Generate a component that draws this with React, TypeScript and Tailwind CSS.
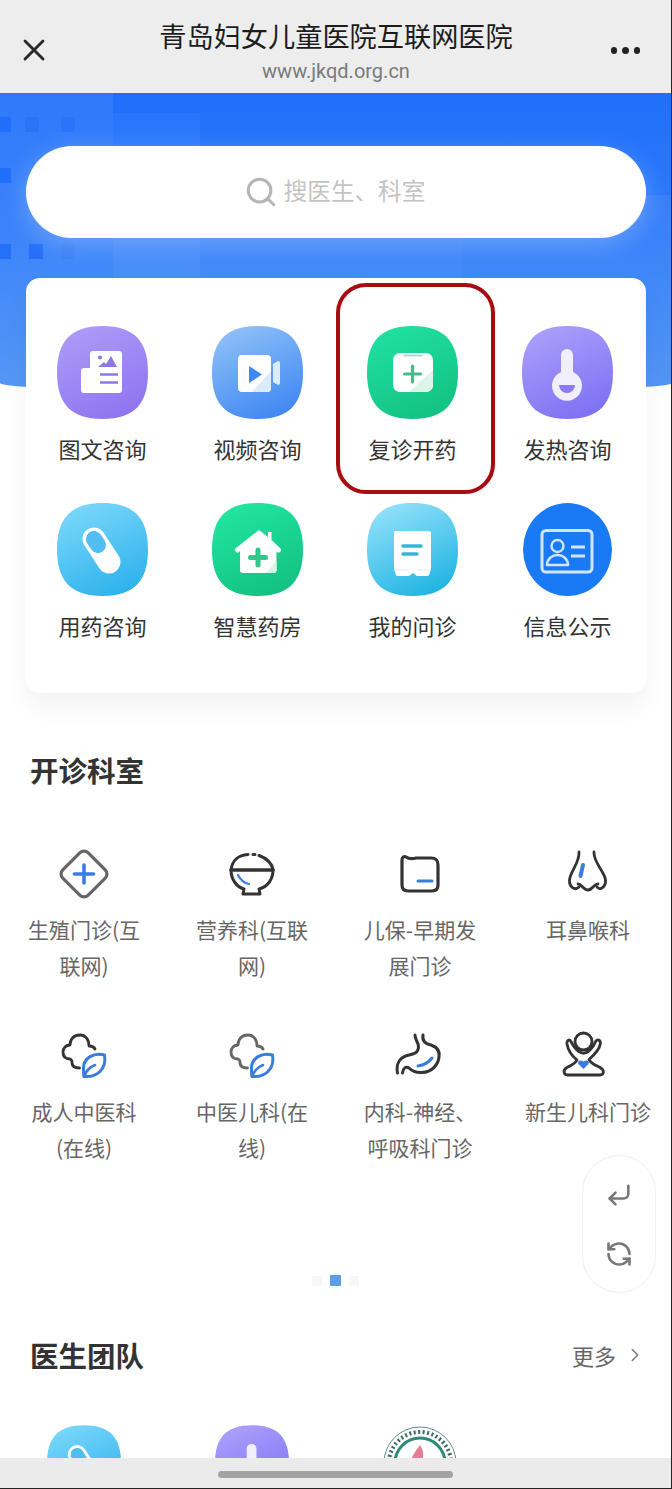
import { CornerDownLeft, RefreshCcw, ChevronRight, Search, X } from "lucide-react";
import type { ReactNode } from "react";

const SQUIRCLE = "M45.5 0C78 0 91 16 91 46.5C91 77 78 93 45.5 93C13 93 0 77 0 46.5C0 16 13 0 45.5 0Z";

function Squircle({ id, from, to, children, x1 = "0.25", y1 = "0", x2 = "0.7", y2 = "1", className = "w-[91px] h-[93px]" }: { id: string; from: string; to: string; children: ReactNode; x1?: string; y1?: string; x2?: string; y2?: string; className?: string }) {
  return (
    <svg viewBox="0 0 91 93" className={className}>
      <defs>
        <linearGradient id={id} x1={x1} y1={y1} x2={x2} y2={y2}>
          <stop offset="0" stopColor={from} />
          <stop offset="1" stopColor={to} />
        </linearGradient>
      </defs>
      <path d={SQUIRCLE} fill={`url(#${id})`} />
      {children}
    </svg>
  );
}

const ImageText = () => (
  <Squircle id="g1" from="#ac9bf8" to="#8f74f0">
    <path d="M36 25H62a3 3 0 0 1 3 3V64a3 3 0 0 1-3 3H27a3 3 0 0 1-3-3V45a3 3 0 0 1 3-3h6V28a3 3 0 0 1 3-3Z" fill="#fff" />
    <circle cx="43" cy="31.5" r="2" fill="#8d78e6" />
    <path d="M41 41l6-5 2 2 5-8 6 11Z" fill="#8d78e6" />
    <path d="M43 48.5H61M43 56.5H61" stroke="#8d78e6" strokeWidth="2.6" />
  </Squircle>
);
const Video = () => (
  <Squircle id="g2" from="#8fc0f8" to="#3f87f2">
    <rect x="26" y="29" width="33" height="37" rx="4" fill="#fff" />
    <path d="M59 45V62a4 4 0 0 1-4 4H40Z" fill="#dcebfc" />
    <path d="M37 40l13 8.5L37 57Z" fill="#3f87f2" />
    <path d="M61 38l5-3a2 2 0 0 1 2 2V57a2 2 0 0 1-2 2l-5-3Z" fill="#dcebfc" />
  </Squircle>
);
const Kit = () => (
  <Squircle id="g3" from="#20e0a0" to="#13c184">
    <rect x="26" y="27" width="40" height="39" rx="7" fill="#fff" />
    <path d="M66 44V59a7 7 0 0 1-7 7H42Z" fill="#dcf5ea" />
    <path d="M37 29.500H55" stroke="#8fdcbc" strokeWidth="1.600" strokeLinecap="round" />
    <path d="M45.5 40V56M37.5 48H53.5" stroke="#3fbf8b" strokeWidth="3.2" strokeLinecap="round" />
  </Squircle>
);
const Thermo = ({ id = "g4", className }: { id?: string; className?: string }) => (
  <Squircle id={id} from="#ab9ffb" to="#7c71f3" className={className}>
    <path d="M39 46V29a6 6 0 0 1 12 0V46a15 15 0 1 1-12 0Z" fill="#f1effe" />
    <path d="M37 59H53a8 8 0 0 1-16 0Z" fill="#8b7bf2" />
  </Squircle>
);
const Pill = ({ id = "g5", className }: { id?: string; className?: string }) => (
  <Squircle id={id} from="#7bd7fa" to="#2db1ec" className={className}>
    <path d="M37 36L52 59" stroke="#fff" strokeWidth="23" strokeLinecap="round" />
    <path d="M37 36L41 42" stroke="#52bdf0" strokeWidth="16" strokeLinecap="round" />
  </Squircle>
);
const House = () => (
  <Squircle id="g6" from="#22e5a2" to="#12c181">
    <path d="M47 27L56 34V29h3.5V37L68 45a2.5 2.5 0 0 1-3 4L64.500 48V67a3 3 0 0 1-3 3H31a3 3 0 0 1-3-3V48L27 49a2.500 2.500 0 0 1-3-4Z" fill="#fff" />
    <path d="M64.500 58V67a3 3 0 0 1-3 3H54Z" fill="#d8f4e7" />
    <path d="M46 47V62M38.500 54.500H53.500" stroke="#2ec88d" strokeWidth="5" strokeLinecap="round" />
  </Squircle>
);
const Receipt = () => (
  <Squircle id="g7" from="#92e1fa" to="#1fb4e2">
    <path d="M27 30a2 2 0 0 1 2-2H62a2 2 0 0 1 2 2V66l-2 6a2 2 0 0 1-2 1H50l-4-3-4 3H31a2 2 0 0 1-2-1l-2-6Z" fill="#fff" />
    <path d="M36 43H54M36 51H50" stroke="#35b6d8" strokeWidth="3.4" strokeLinecap="round" />
    <path d="M28 67H41M50 67H63" stroke="#d6eef5" strokeWidth="1.200" />
  </Squircle>
);
const IdCard = () => (
  <svg viewBox="0 0 91 93" className="w-[91px] h-[93px]">
    <ellipse cx="45.500" cy="46.500" rx="44.500" ry="46.500" fill="#1a7af6" />
    <rect x="20" y="27.500" width="50" height="41.500" rx="4" fill="none" stroke="#d2e5fd" strokeWidth="3" />
    <circle cx="35.500" cy="43" r="6" fill="none" stroke="#d2e5fd" strokeWidth="2.400" />
    <path d="M25 62c0-6 5-10 10.500-10S46 56 46 62Z" fill="none" stroke="#d2e5fd" strokeWidth="2.400" strokeLinejoin="round" />
    <path d="M49 44H63M49 53H63" stroke="#d2e5fd" strokeWidth="3.200" />
  </svg>
);

const Dept = ({ children }: { children: ReactNode }) => (
  <svg viewBox="0 0 52 52" className="w-[52px] h-[52px] mx-auto" fill="none" strokeLinecap="round" strokeLinejoin="round">
    {children}
  </svg>
);
const BLUE = "#3a7be0";
const INK = "#333";

const DiamondIcon = () => (
  <Dept>
    <rect x="8" y="8" width="36" height="36" rx="6" transform="rotate(45 26 26)" stroke="#666" strokeWidth="3.200" />
    <path d="M26 17V35M16.500 26H35.500" stroke={BLUE} strokeWidth="3.600" />
  </Dept>
);
const BowlIcon = () => (
  <Dept>
    <path d="M5 22C6 13 12 7 22 6.500M27 6.500H29M33 7.500C40 10 46 15 47 22" stroke={INK} strokeWidth="3" />
    <path d="M5 22H47" stroke={INK} strokeWidth="3.400" />
    <path d="M5 22C5 32 11 39 18 41L17 46H34L33 41C41 39 47 32 47 22" stroke={INK} strokeWidth="3" />
    <path d="M12 27C14 31 18 35 23 36" stroke={BLUE} strokeWidth="2.200" />
  </Dept>
);
const FolderIcon = () => (
  <Dept>
    <path d="M8 12C8 9 10 8 12 9C15 11 18 11 22 10H37C42 10 44 12 44 17V37C44 41 42 43 38 43H14C10 43 8 41 8 37Z" stroke={INK} strokeWidth="3.200" />
    <path d="M24 33H38" stroke={BLUE} strokeWidth="3" />
  </Dept>
);
const NoseIcon = () => (
  <Dept>
    <path d="M17 4C18 14 8 24 7.500 32C7 39 13 43 17 39" stroke={INK} strokeWidth="2.800" />
    <path d="M16 36C20 36 21 42 26 42C31 42 31 36 36 36" stroke={INK} strokeWidth="2.800" />
    <path d="M32 4C31 14 43 24 43.500 32C44 39 38 43 35 39" stroke={INK} strokeWidth="2.800" />
    <path d="M21 17L18.500 28" stroke={BLUE} strokeWidth="4" />
  </Dept>
);
const HerbIcon = ({ color }: { color: string }) => (
  <Dept>
    <path d="M21.500 38C17 38 14 36 14 32.500C14 30.500 13.500 29.500 12 29C8 29 5 27 5 22C5 18 8 15 12 15C12 9 16 5 22 5C27 5 31 9 31 16C34 16 36 17 37 19" stroke={color} strokeWidth="2.800" />
    <path d="M46.500 25C36 22 25.500 28 25.500 38C25.500 41 25.500 44 26 46.500C38 47.500 49 40 46.500 25Z" stroke={BLUE} strokeWidth="3" />
    <path d="M26 46.500C28 41 32 37 37 35" stroke={BLUE} strokeWidth="2.600" />
  </Dept>
);
const StomachIcon = () => (
  <Dept>
    <path d="M29 5C28 11 32 14 37 15C43 17 46 21 45 27C44 35 38 42 28 42.500C21 43 18 41 15 38C12 36 9 38 8.500 43" stroke={INK} strokeWidth="3" />
    <path d="M3.500 43C2 35 5 28 13 25.500C19 24 24 24 24.500 17C24.500 12 21 10 21 5" stroke={INK} strokeWidth="3" />
    <path d="M24 36C30 35 35 32 38 28" stroke={BLUE} strokeWidth="3" />
  </Dept>
);
const BabyIcon = () => (
  <Dept>
    <circle cx="21.500" cy="11.500" r="8.500" stroke={INK} strokeWidth="2.800" />
    <path d="M9 11.700C12 18 17 23.300 21.500 23.300C26 23.300 31 18 33.500 11.700C35 8.500 39 10 38.300 14C37.500 20 32 25 27 29.500C28 33 33 35 38 37.500C43 40 42 45 38 45H5.500C1.500 45 0.500 40 5 37.500C10 35 14 33 15 30C10 26 6 20 5 14C4.500 10 8 8.500 9 11.700Z" stroke={INK} strokeWidth="2.800" />
    <path d="M21.500 39L16.500 34C15 31.500 18 29 21.500 31.500C25 29 28 31.500 26.500 34Z" fill={BLUE} />
  </Dept>
);
const Seal = () => (
  <svg viewBox="0 0 74 76" className="w-[74px] h-[76px] mx-auto">
    <circle cx="37" cy="38" r="36" fill="#fff" stroke="#3c6d66" strokeWidth="0.800" />
    <circle cx="37" cy="38" r="31" fill="none" stroke="#3c6d66" strokeWidth="4" strokeDasharray="2 2.500" />
    <circle cx="37" cy="38" r="25" fill="none" stroke="#2e8b7b" strokeWidth="3" />
    <path d="M37 20C33 26 28 31 28 38L38 44C40 34 42 27 37 20Z" fill="#e27d97" />
  </svg>
);

const services: [ReactNode, string][] = [
  [<ImageText />, "图文咨询"],
  [<Video />, "视频咨询"],
  [<Kit />, "复诊开药"],
  [<Thermo />, "发热咨询"],
  [<Pill />, "用药咨询"],
  [<House />, "智慧药房"],
  [<Receipt />, "我的问诊"],
  [<IdCard />, "信息公示"],
];
const depts: [ReactNode, string][] = [
  [<DiamondIcon />, "生殖门诊(互联网)"],
  [<BowlIcon />, "营养科(互联网)"],
  [<FolderIcon />, "儿保-早期发展门诊"],
  [<NoseIcon />, "耳鼻喉科"],
  [<HerbIcon color="#333" />, "成人中医科(在线)"],
  [<HerbIcon color="#666" />, "中医儿科(在线)"],
  [<StomachIcon />, "内科-神经、呼吸科门诊"],
  [<BabyIcon />, "新生儿科门诊"],
];

export default function App() {
  return (
    <div className="relative w-[672px] h-[1489px] overflow-hidden bg-white font-['Noto_Sans_CJK_SC','Noto_Sans',sans-serif]">
      <header className="h-[93px] bg-[#ededed] grid grid-cols-[1fr_auto_1fr] items-center px-[16px]">
        <X size={36} strokeWidth={1.9} color="#2a2a2a" className="mt-[7px]" />
        <div className="flex flex-col items-center pt-[4px]">
          <div className="text-[27.2px] leading-[40px] text-[#1c1c1c] whitespace-nowrap mt-[2px]">青岛妇女儿童医院互联网医院</div>
          <div className="text-[20px] leading-[26px] mt-[3px] text-[#7a7a7a] font-['Roboto',sans-serif]">www.jkqd.org.cn</div>
        </div>
        <div className="flex justify-end gap-[5px] pt-[8px] pr-[16px]">
          <span className="w-[6.5px] h-[6.5px] rounded-full bg-[#222]" />
          <span className="w-[6.5px] h-[6.5px] rounded-full bg-[#222]" />
          <span className="w-[6.5px] h-[6.5px] rounded-full bg-[#222]" />
        </div>
      </header>

      <section className="relative px-[26px] pt-[53px]">
        <div className="absolute left-0 top-0 w-full h-[300px] overflow-hidden rounded-b-[336px_10px] bg-[linear-gradient(180deg,#1f6ffb_0px,#2f7cfa_150px,#4a90f4_300px)]">
          <div className="absolute left-0 top-0 w-[113px] h-[300px] bg-white/[0.07]" />
          <div className="absolute left-[113px] top-[20px] w-[87px] h-[280px] bg-white/[0.04]" />
          <div className="absolute left-[113px] top-[145px] w-[350px] h-[155px] bg-white/[0.08]" />
          <div className="absolute left-[463px] top-[102px] w-[209px] h-[198px] bg-white/[0.06]" />
          <div className="absolute left-0 top-[24px] w-[11px] h-[15px] bg-[#1f6ffb]" />
          <div className="absolute left-[25px] top-[24px] w-[14px] h-[15px] bg-[#2a74fa]" />
          <div className="absolute left-[61px] top-[24px] w-[14px] h-[15px] bg-[#2a74fa]" />
          <div className="absolute left-0 top-[75px] w-[11px] h-[15px] bg-[#1f6ffb]" />
          <div className="absolute left-0 top-[151px] w-[11px] h-[15px] bg-[#2470f8]" />
          <div className="absolute left-[29px] top-[151px] w-[14px] h-[15px] bg-[#2470f8]" />
          <div className="absolute left-[61px] top-[151px] w-[14px] h-[15px] bg-[#3b80f6]" />
        </div>

        <div className="relative h-[92px] rounded-full bg-white flex items-center justify-center shadow-[0_6px_24px_rgba(255,255,255,0.25)]">
          <Search size={34} strokeWidth={2.1} color="#b5b5b5" className="mr-[6px]" />
          <span className="text-[23.6px] leading-[32px] text-[#c4c4c4] mb-[4px] mr-[3px]">搜医生、科室</span>
        </div>

        <div className="relative mt-[40px] h-[415px] rounded-[14px] bg-white pt-[48px] shadow-[0_14px_26px_rgba(0,0,0,0.05)]">
          <div className="grid grid-cols-4 gap-y-[37px] -ml-px mr-px">
            {services.map(([icon, label]) => (
              <div key={label} className="flex flex-col items-center">
                {icon}
                <div className="mt-[11px] text-[22px] leading-[36px] text-[#333]">{label}</div>
              </div>
            ))}
          </div>
          <div className="absolute left-[310px] top-[5px] w-[159px] h-[211px] rounded-[30px] border-4 border-[#a80b10]" />
        </div>
      </section>

      <h2 className="mt-[57px] pl-[30px] text-[28.5px] leading-[40px] font-bold text-[#333]">开诊科室</h2>

      <div className="mt-[58px] grid grid-cols-4 gap-y-[47px]">
        {depts.map(([icon, label]) => (
          <div key={label} className="text-center">
            {icon}
            <div className="mt-[11px] mx-auto w-[126px] text-[21px] leading-[36px] text-[#666]">{label}</div>
          </div>
        ))}
      </div>

      <div className="mt-[110px] pr-[2px] flex justify-center items-center gap-[8px]">
        <span className="w-[10px] h-[10px] bg-[#f7f7f7]" />
        <span className="w-[11px] h-[11px] bg-[#5b9fe6]" />
        <span className="w-[10px] h-[10px] bg-[#f7f7f7]" />
      </div>

      <div className="mt-[49px] flex items-center justify-between pl-[30px] pr-[26px]">
        <h2 className="text-[28.5px] leading-[40px] font-bold text-[#333]">医生团队</h2>
        <div className="flex items-center gap-[8px] text-[22px] leading-[40px] text-[#666]">
          更多
          <ChevronRight size={22} strokeWidth={1.6} color="#777" />
        </div>
      </div>

      <div className="mt-[50px] grid grid-cols-4">
        <div className="flex justify-center"><Pill id="p2" className="w-[74px] h-[76px]" /></div>
        <div className="flex justify-center"><Thermo id="t2" className="w-[74px] h-[76px]" /></div>
        <div><Seal /></div>
      </div>

      <div className="absolute right-[16px] top-[1155px] w-[74px] h-[138px] rounded-full bg-white border border-[#f0f0f0] flex flex-col items-center justify-center gap-[31px]">
        <CornerDownLeft size={28} strokeWidth={2.2} color="#777" />
        <RefreshCcw size={28} strokeWidth={2.2} color="#777" />
      </div>

      <div className="absolute left-0 right-0 bottom-0 h-[31px] bg-[#ebebeb] flex justify-center pt-[13px] pr-[2px] border-b border-[#222]">
        <div className="w-[235px] h-[7px] rounded-full bg-[#a3a3a3]" />
      </div>

      <div className="absolute right-0 top-0 bottom-0 w-px bg-[#222]" />
    </div>
  );
}
